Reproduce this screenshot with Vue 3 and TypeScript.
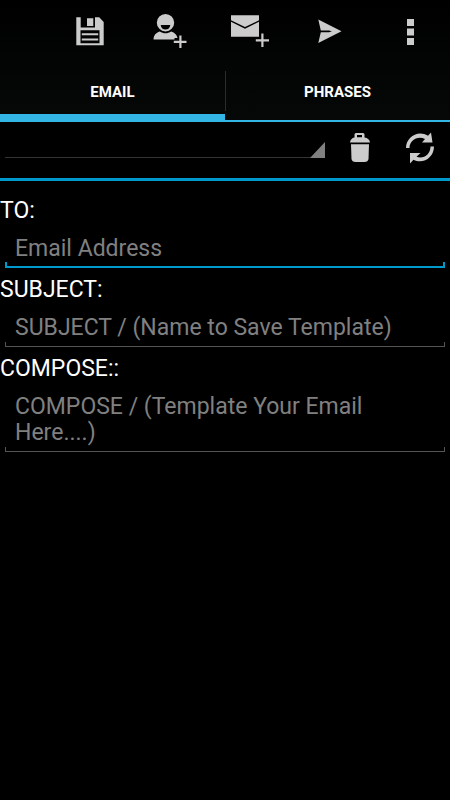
<script setup lang="ts">
import { ref } from 'vue'

type Tab = 'email' | 'phrases'

const activeTab = ref<Tab>('email')
const template = ref('')
const to = ref('')
const subject = ref('')
const body = ref('')
const tabs: { id: Tab; label: string }[] = [
  { id: 'email', label: 'EMAIL' },
  { id: 'phrases', label: 'PHRASES' },
]
</script>

<template>
  <main class="app">
    <header class="top">
      <div class="actions">
        <button type="button" class="action" aria-label="Save">
          <svg viewBox="0 0 48 48" class="icon">
            <path fill-rule="evenodd" d="M10.300 10.300H14.700V20.500H29V10.300H33.200L37.700 15V38.300H10.300ZM14.500 23.200V36.200H33.500V23.200Z" />
            <path d="M21 11.300h6.300v7.700h-6.300zM15.800 26.200h16.400v2H15.800zM15.800 31.400h16.400v2.200H15.800z" />
          </svg>
        </button>
        <button type="button" class="action" aria-label="Add contact">
          <svg viewBox="0 0 48 48" class="icon">
            <path fill-rule="evenodd" d="M19.500 7a8.700 8.700 0 0 1 0 17.400a8.700 8.700 0 0 1 0-17.400ZM14.700 18c.4 3.200 2.200 4.600 4.800 4.600s4.400-1.400 4.800-4.600Z" />
            <path d="M7.500 32.500c.3-4.300 2.300-6.800 6.300-8 3.500 2.400 7.900 2.400 11.400 0 3.500 1 5.600 3.400 6.300 6.500h-3v1.500Z" />
            <path d="M33.300 28.500h2.200v5.200h5v2.200h-5v5.200h-2.200v-5.200h-5.500v-2.200h5.500Z" />
          </svg>
        </button>
        <button type="button" class="action" aria-label="Add email">
          <svg viewBox="0 0 48 48" class="icon">
            <path d="M5 8.300h28v5L19 20 5 13.300ZM5 14.800l14 6.900 14-6.900v14.900H5Z" />
            <path d="M35.300 26.500h2.200v5.800H43v2.200h-5.500V40h-2.200v-5.500h-5.500v-2.200h5.500Z" />
          </svg>
        </button>
        <button type="button" class="action" aria-label="Send">
          <svg viewBox="0 0 48 48" class="icon">
            <path d="M12.300 12.500 35.500 24.300 12.300 36l2.500-10.800H23l3-.9-3-.8H14.800Z" />
          </svg>
        </button>
        <button type="button" class="action" aria-label="More options">
          <svg viewBox="0 0 48 48" class="icon">
            <path d="M21 12h7v7h-7zM21 21.500h7v7h-7zM21 31h7v7h-7z" />
          </svg>
        </button>
      </div>
      <nav class="tabs">
        <button
          v-for="tab in tabs"
          :key="tab.id"
          type="button"
          class="tab"
          :class="{ active: activeTab === tab.id }"
          @click="activeTab = tab.id"
        >{{ tab.label }}</button>
      </nav>
    </header>

    <section class="picker">
      <div class="spinner">
        <select v-model="template" aria-label="Template">
          <option value=""></option>
        </select>
      </div>
      <button type="button" class="tool" aria-label="Delete template">
        <svg viewBox="0 0 36 36" class="tool-icon">
          <path fill-rule="evenodd" d="M12.500 7.500V4.500Q12.500 3 14 3h7q1.500 0 1.500 1.500v3q5 .8 5.500 5H8q.5-4.200 4.500-5ZM15 5v2.300h5V5Z" />
          <path d="M9 14.200h18L26.500 29q-.5 3-4 3h-9q-3.500 0-4-3Z" />
        </svg>
      </button>
      <button type="button" class="tool" aria-label="Refresh">
        <svg viewBox="0 0 36 36" class="tool-icon">
          <path d="M4 18C4 7.500 15.500-.5 26 5.700L29 2.500 30.500 12.500H20L23 9C15.500 5.300 7.500 10.500 7.500 18Z" />
          <path d="M32 16.500C32 27.500 21 34.700 11.500 29.700L8 33.500V23h10.500L14.500 26.800C21.500 29.500 28.500 24.500 28.500 16.500Z" />
        </svg>
      </button>
    </section>

    <form class="form" @submit.prevent>
      <label for="to" class="label">TO:</label>
      <div class="field focused">
        <input id="to" v-model="to" type="email" placeholder="Email Address" />
      </div>
      <label for="subject" class="label">SUBJECT:</label>
      <div class="field">
        <input id="subject" v-model="subject" type="text" placeholder="SUBJECT / (Name to Save Template)" />
      </div>
      <label for="body" class="label">COMPOSE::</label>
      <div class="field">
        <textarea id="body" v-model="body" rows="2" placeholder="COMPOSE / (Template Your Email Here....)"></textarea>
      </div>
    </form>
  </main>
</template>

<style>
body {
  margin: 0;
  background: #000;
}
</style>

<style scoped>
.app {
  min-height: 100vh;
  background: #000;
  color: #fff;
  font-family: Roboto, sans-serif;
}

button,
input,
select,
textarea {
  box-sizing: border-box;
  margin: 0;
  padding: 0;
  border: 0;
  border-radius: 0;
  outline: 0;
  background: transparent;
  color: inherit;
  font-family: inherit;
}

.top {
  background: linear-gradient(#000, #060808);
}

.actions {
  display: flex;
  justify-content: flex-end;
  height: 62px;
}

.action,
.tool {
  display: flex;
  align-items: center;
  justify-content: center;
}

.action {
  width: 80px;
}

.icon {
  width: 48px;
  height: 48px;
  fill: #ccc;
}

.tabs {
  display: flex;
  height: 60px;
}

.tab {
  position: relative;
  flex: 1;
  padding-top: 2px;
  border-bottom: 2px solid #33b5e5;
  font-size: 15px;
  font-weight: 700;
  line-height: 20px;
}

.tab.active {
  padding-top: 8px;
  border-bottom-width: 8px;
}

.tab + .tab::before {
  content: '';
  position: absolute;
  left: 0;
  top: 9px;
  width: 1px;
  height: 40px;
  background: #2a2c2c;
}

.picker {
  display: flex;
  align-items: flex-start;
  height: 56px;
  border-bottom: 3px solid #0099cc;
}

.spinner {
  position: relative;
  flex: 1;
  margin: 20px 5px 0;
  border-bottom: 1px solid #333;
}

.spinner select {
  display: block;
  width: 100%;
  height: 15px;
  appearance: none;
}

.spinner::after {
  content: '';
  position: absolute;
  right: 0;
  bottom: -1px;
  width: 15px;
  height: 16px;
  background: #808080;
  clip-path: polygon(100% 0, 100% 100%, 0 100%);
  pointer-events: none;
}

.tool {
  width: 60px;
  height: 52px;
}

.tool-icon {
  width: 36px;
  height: 36px;
  fill: #ccc;
}

.form {
  padding-top: 17px;
}

.label {
  display: block;
  font-size: 23px;
  line-height: 26px;
}

.field {
  position: relative;
  margin: 0 5px;
  padding: 12px 10px 15px;
}

.field::after {
  content: '';
  position: absolute;
  left: 0;
  right: 0;
  bottom: 9px;
  height: 4px;
  border: 1px solid #555;
  border-top: 0;
  pointer-events: none;
}

.field.focused::after {
  border-color: #0099cc;
  border-width: 0 2px 2px;
}

.field input,
.field textarea {
  display: block;
  width: 100%;
  font-size: 23px;
  line-height: 26px;
}

.field input {
  height: 26px;
}

.field textarea {
  height: 52px;
  resize: none;
  overflow: hidden;
}

.field ::placeholder {
  color: #808080;
  opacity: 1;
}
</style>
